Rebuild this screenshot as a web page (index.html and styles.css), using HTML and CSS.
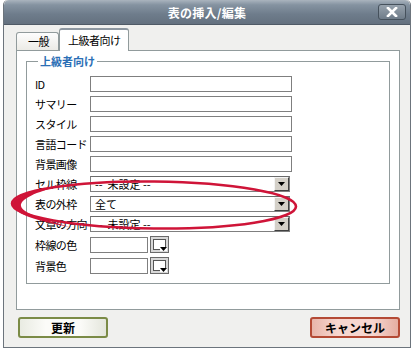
FILE: index.html
```html
<!DOCTYPE html>
<html lang="ja">
<head>
<meta charset="utf-8">
<title>表の挿入/編集</title>
<link rel="stylesheet" href="styles.css">
</head>
<body>
<div class="page">
  <div class="dialog">
    <div class="titlebar">
      <span class="title">表の挿入/編集</span>
      <span class="close">
        <svg width="12" height="10" viewBox="0 0 12 10"><path d="M2 1 L10 9 M10 1 L2 9" stroke="#fff" stroke-width="2.6" stroke-linecap="square"/></svg>
      </span>
    </div>
    <div class="body">
      <div class="tabs">
        <span class="tab">一般</span>
        <span class="tab active">上級者向け</span>
      </div>
      <div class="panel">
        <fieldset class="group">
          <legend class="legend">上級者向け</legend>
          <div class="rows">
            <label class="lbl">ID</label><span class="input"></span>
            <label class="lbl">サマリー</label><span class="input"></span>
            <label class="lbl">スタイル</label><span class="input"></span>
            <label class="lbl">言語コード</label><span class="input"></span>
            <label class="lbl">背景画像</label><span class="input"></span>
            <label class="lbl">セル枠線</label><span class="select"><span class="val">--&nbsp;&nbsp;未設定 --</span><span class="arrow"><svg width="7" height="4" viewBox="0 0 7 4"><path d="M0 0 H7 L3.5 4 Z" fill="#000"/></svg></span></span>
            <label class="lbl">表の外枠</label><span class="select"><span class="val">全て</span><span class="arrow"><svg width="7" height="4" viewBox="0 0 7 4"><path d="M0 0 H7 L3.5 4 Z" fill="#000"/></svg></span></span>
            <label class="lbl">文章の方向</label><span class="select"><span class="val">--&nbsp;&nbsp;未設定 --</span><span class="arrow"><svg width="7" height="4" viewBox="0 0 7 4"><path d="M0 0 H7 L3.5 4 Z" fill="#000"/></svg></span></span>
            <label class="lbl">枠線の色</label><span class="colorrow"><span class="input short"></span><span class="picker"><span class="pickinner"></span><svg class="picktri" width="7" height="4" viewBox="0 0 7 4"><path d="M0 0 H7 L3.5 4 Z" fill="#000"/></svg></span></span>
            <label class="lbl">背景色</label><span class="colorrow"><span class="input short"></span><span class="picker"><span class="pickinner"></span><svg class="picktri" width="7" height="4" viewBox="0 0 7 4"><path d="M0 0 H7 L3.5 4 Z" fill="#000"/></svg></span></span>
          </div>
        </fieldset>
      </div>
      <div class="footer">
        <button class="btn ok">更新</button>
        <button class="btn cancel">キャンセル</button>
      </div>
    </div>
  </div>
  <svg class="mark" width="414" height="353" viewBox="0 0 414 353">
    <ellipse cx="154" cy="205" rx="142" ry="23.5" fill="none" stroke="#cf1438" stroke-width="2.6" transform="rotate(0.6 154 205)"/>
    <path d="M60 186 C30 191, 10 198, 13 206 C16 214, 36 221, 70 227 C42 219, 22 213, 21 206 C20 199, 36 192, 60 186 Z" fill="#cf1438"/>
  </svg>
</div>
</body>
</html>
```

FILE: styles.css
```css
html, body {
  margin: 0;
  padding: 0;
  background: #ffffff;
}

.page {
  position: relative;
  width: 414px;
  height: 353px;
  font-family: "Noto Sans CJK JP", "DejaVu Sans", sans-serif;
  font-size: 12px;
  color: #000;
}

.dialog {
  margin-left: 3px;
  width: 408px;
  height: 348px;
  box-sizing: border-box;
  border: 1px solid #6c747c;
  border-top: none;
  border-radius: 5px 5px 0 0;
  display: flex;
  flex-direction: column;
  background: #f0f0ee;
  overflow: hidden;
}

.titlebar {
  height: 24px;
  flex: none;
  display: flex;
  align-items: center;
  justify-content: center;
  position: relative;
  background: linear-gradient(#aab4be 0%, #8593a1 20%, #6e7c8b 60%, #64717f 100%);
  border-bottom: 1px solid #4f5a66;
  border-radius: 5px 5px 0 0;
}

.title {
  color: #ffffff;
  font-weight: bold;
  font-size: 12px;
  letter-spacing: 0.3px;
}

.close {
  position: absolute;
  right: 4px;
  top: 4px;
  width: 28px;
  height: 16px;
  box-sizing: border-box;
  border: 1px solid #46515c;
  border-radius: 3px;
  background: linear-gradient(#97a2ad, #6f7c89);
  display: flex;
  align-items: center;
  justify-content: center;
}

.body {
  flex: 1;
  display: flex;
  flex-direction: column;
  padding: 3px 10px 0 12px;
}

.tabs {
  display: flex;
  align-items: flex-end;
  height: 22px;
  font-size: 11px;
  letter-spacing: -0.5px;
}

.tab {
  height: 18px;
  box-sizing: border-box;
  padding: 0 9px 0 11px;
  border: 1px solid #919b9c;
  border-bottom: none;
  border-radius: 3px 3px 0 0;
  background: linear-gradient(#fdfdfd, #ecebe6);
  display: flex;
  align-items: center;
  line-height: 1;
}

.tab.active {
  height: 23px;
  background: #ffffff;
  border-top: 2px solid #8d97a0;
  padding: 0 7px 0 8px;
  margin-bottom: -1px;
  position: relative;
}

.panel {
  width: 384px;
  height: 260px;
  box-sizing: border-box;
  background: #ffffff;
  border: 1px solid #919b9c;
  padding: 3px 10px 0 9px;
}

.group {
  margin: 0;
  border: 1px solid #919b9c;
  padding: 7px 0 9px 8px;
  width: 364px;
  box-sizing: border-box;
}

.legend {
  color: #2b6fb6;
  font-weight: bold;
  font-size: 11px;
  padding: 0 2px;
  margin-left: 3px;
  line-height: 15px;
}

.rows {
  display: grid;
  grid-template-columns: 55px auto;
  row-gap: 4px;
  align-items: center;
  justify-items: start;
  font-size: 11px;
}

.lbl {
  line-height: 16px;
  white-space: nowrap;
  letter-spacing: -0.6px;
}

.input {
  width: 202px;
  height: 16px;
  box-sizing: border-box;
  border: 1px solid #7f7f7f;
  background: #fff;
}

.input.short {
  width: 58px;
}

.select {
  width: 200px;
  height: 16px;
  box-sizing: border-box;
  border: 1px solid #7f7f7f;
  border-top-color: #6a6a6a;
  background: #fff;
  display: flex;
  align-items: center;
  position: relative;
}

.val {
  flex: 1;
  padding-left: 4px;
  line-height: 14px;
  white-space: nowrap;
}

.arrow {
  width: 15px;
  height: 14px;
  box-sizing: border-box;
  background: #d4d0c8;
  border: 1px solid;
  border-color: #f4f4f4 #404040 #404040 #f4f4f4;
  display: flex;
  align-items: center;
  justify-content: center;
}

.colorrow {
  display: flex;
  align-items: center;
  gap: 2px;
}

.picker {
  width: 19px;
  height: 17px;
  box-sizing: border-box;
  border: 1px solid #6a6a6a;
  background: #d8d8d8;
  position: relative;
  padding: 2px;
}

.pickinner {
  display: block;
  width: 100%;
  height: 100%;
  box-sizing: border-box;
  border: 1px solid #555;
  background: #fff;
}

.picktri {
  position: absolute;
  right: 1px;
  bottom: 1px;
  background: #fff;
}

.footer {
  display: flex;
  justify-content: space-between;
  padding: 7px 0 0 2px;
}

.btn {
  width: 90px;
  height: 21px;
  box-sizing: border-box;
  font-family: "Noto Sans CJK JP", "DejaVu Sans", sans-serif;
  font-size: 12px;
  font-weight: bold;
  color: #000;
  border-radius: 3px;
  padding: 0;
  line-height: 1;
}

.btn.ok {
  border: 2px solid #7b8b46;
  background: linear-gradient(90deg, #e9ebe2 0%, #fbfbf8 30%, #fbfbf8 70%, #e4e6dc 100%);
}

.btn.cancel {
  border: 2px solid #b44a35;
  background: linear-gradient(90deg, #e8b5aa 0%, #f7d7d0 30%, #f7d7d0 70%, #e5aea2 100%);
}

.mark {
  position: absolute;
  left: 0;
  top: 0;
  pointer-events: none;
}
```
